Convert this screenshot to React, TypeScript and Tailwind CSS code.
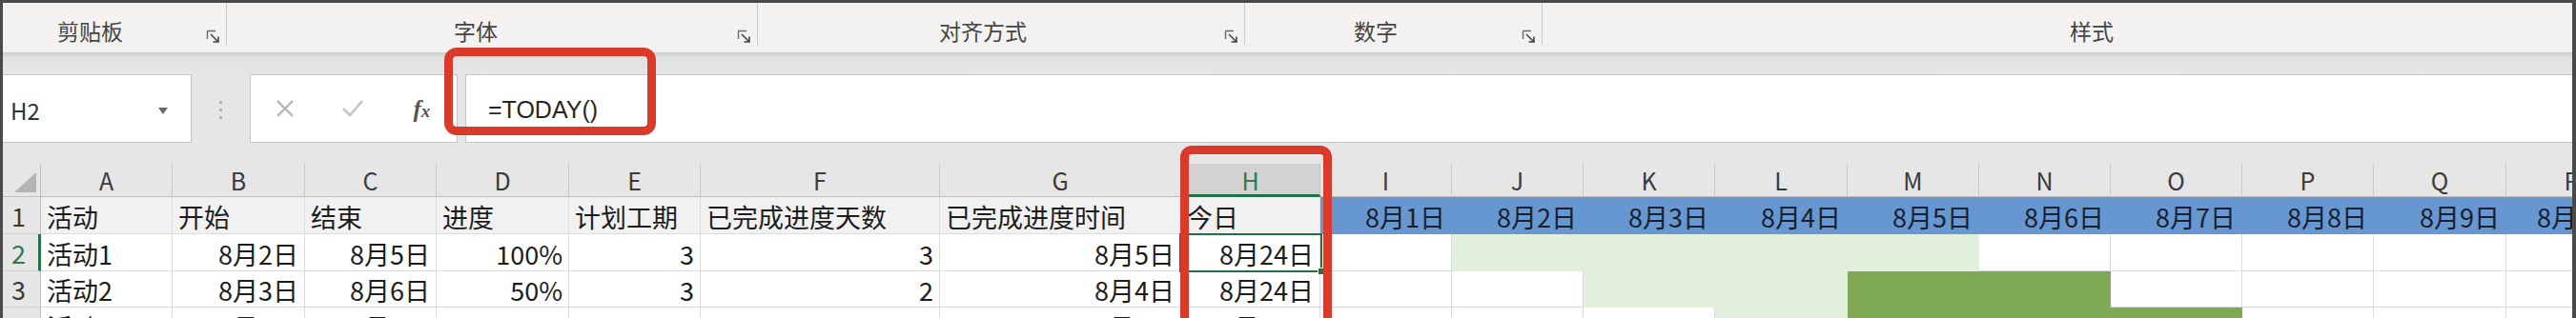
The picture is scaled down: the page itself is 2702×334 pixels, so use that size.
import React from "react";

type Fill = "none" | "head" | "blue" | "light" | "dark";

const fillClass: Record<Fill, string> = {
  none: "bg-white border-[#dadada]",
  head: "bg-[#f1f1f1] border-[#dedede]",
  blue: "bg-[#6797d1] border-[#6797d1] text-[#17202e]",
  light: "bg-[#e2efda] border-[#e2efda]",
  dark: "bg-[#7fa955] border-[#7fa955]",
};

const letters = ["A", "B", "C", "D", "E", "F", "G", "H", "I", "J", "K", "L", "M", "N", "O", "P", "Q", "R"];

const groups = [
  { label: "剪贴板", cls: "w-[235px] pl-[57px]", launcher: true },
  { label: "字体", cls: "w-[557px] pl-[238px]", launcher: true },
  { label: "对齐方式", cls: "w-[511px] pl-[190px]", launcher: true },
  { label: "数字", cls: "w-[312px] pl-[114px]", launcher: true },
  { label: "样式", cls: "flex-1 pl-[553px] border-r-0", launcher: false },
];

const days = ["8月1日", "8月2日", "8月3日", "8月4日", "8月5日", "8月6日", "8月7日", "8月8日", "8月9日", "8月10日"];

const rows: { n: number; cells: string[]; gantt: Fill[] }[] = [
  {
    n: 2,
    cells: ["活动1", "8月2日", "8月5日", "100%", "3", "3", "8月5日", "8月24日"],
    gantt: ["none", "light", "light", "light", "light", "none", "none", "none", "none", "none"],
  },
  {
    n: 3,
    cells: ["活动2", "8月3日", "8月6日", "50%", "3", "2", "8月4日", "8月24日"],
    gantt: ["none", "none", "light", "light", "dark", "dark", "none", "none", "none", "none"],
  },
  {
    n: 4,
    cells: ["活动3", "8月4日", "8月7日", "33%", "3", "1", "8月5日", "8月24日"],
    gantt: ["none", "none", "none", "light", "dark", "dark", "dark", "none", "none", "none"],
  },
];

function Launcher() {
  return (
    <svg width="15" height="15" viewBox="0 0 15 15" className="mb-[1px] ml-auto mr-[6px] self-end">
      <path d="M1.5 1.5H10M1.5 1.5V10" stroke="#6b6b6b" strokeWidth="1.4" fill="none" />
      <path d="M5 5L13 13M13 7.5V13H7.5" stroke="#444" strokeWidth="1.6" fill="none" />
    </svg>
  );
}

function Cell({ text = "", right = false, fill = "none" }: { text?: string; right?: boolean; fill?: Fill }) {
  return (
    <div
      className={`flex items-end overflow-hidden whitespace-nowrap border-r border-b pb-[4px] text-[27px] leading-none text-[#1c1c1c] ${
        right ? "justify-end pr-[6px]" : "pl-[6px]"
      } ${fillClass[fill]}`}
    >
      {text}
    </div>
  );
}

function RowHead({ n, active = false }: { n: number; active?: boolean }) {
  return (
    <div
      className={`flex items-center border-b border-[#d2d2d2] bg-[#e6e6e6] pl-[9px] text-[27px] leading-none ${
        active ? "border-r-[3px] border-r-[#217346] text-[#2f7a4e]" : "border-r border-r-[#bfbfbf] text-[#3a3a3a]"
      }`}
    >
      {n}
    </div>
  );
}

export default function App() {
  return (
    <div className="relative h-[334px] w-[2702px] overflow-hidden bg-[#4a4a4a] font-['Noto_Sans_CJK_SC','Liberation_Sans',sans-serif]">
      <div className="ml-[3px] mt-[3px] flex h-[331px] w-[2695px] flex-col overflow-hidden bg-[#e6e6e6]">
        {/* ribbon group labels */}
        <div className="flex h-[52px] shrink-0 items-start bg-[#f3f2f1]">
          {groups.map((g) => (
            <div key={g.label} className={`flex h-[44px] border-r border-[#c8c8c8] ${g.cls}`}>
              <span className="mb-[3px] self-end text-[23px] leading-none text-[#444]">{g.label}</span>
              {g.launcher && <Launcher />}
            </div>
          ))}
        </div>

        <div className="h-[23px] shrink-0 bg-[linear-gradient(#cdcdcd,#e2e2e2_6px,#e6e6e6)]" />

        {/* formula bar */}
        <div className="flex h-[72px] shrink-0">
          <div className="flex w-[198px] items-center border-y border-r border-[#c6c6c6] bg-white pl-[8px] pt-[4px]">
            <span className="text-[24px] leading-none text-[#333]">H2</span>
            <svg width="10" height="7" viewBox="0 0 10 7" className="ml-auto mr-[24px]">
              <path d="M0 0H10L5 7Z" fill="#6a6a6a" />
            </svg>
          </div>
          <div className="flex w-[61px] flex-col items-center justify-center gap-[5px] pt-[2px]">
            <span className="h-[3px] w-[3px] rounded-full bg-[#a8a8a8]" />
            <span className="h-[3px] w-[3px] rounded-full bg-[#a8a8a8]" />
            <span className="h-[3px] w-[3px] rounded-full bg-[#a8a8a8]" />
          </div>
          <div className="flex w-[218px] border border-[#c6c6c6] bg-white">
            <div className="flex w-[72px] items-center justify-center">
              <svg width="20" height="20" viewBox="0 0 20 20">
                <path d="M2 2L18 18M18 2L2 18" stroke="#b4b4b4" strokeWidth="2.4" />
              </svg>
            </div>
            <div className="flex w-[72px] items-center justify-center">
              <svg width="24" height="20" viewBox="0 0 24 20">
                <path d="M2 10L9 17L22 2" stroke="#c6c6c6" strokeWidth="2.6" fill="none" />
              </svg>
            </div>
            <div className="flex w-[74px] items-center justify-center">
              <span className="font-['Liberation_Serif',serif] text-[25px] font-bold italic leading-none text-[#555]">
                f<span className="text-[19px]">x</span>
              </span>
            </div>
          </div>
          <div className="w-[8px]" />
          <div className="flex flex-1 items-center border-y border-l border-[#c6c6c6] bg-white pl-[23px] pt-[2px]">
            <span className="font-['Liberation_Sans',sans-serif] text-[25px] leading-none text-[#262626]">=TODAY()</span>
          </div>
        </div>

        <div className="h-[22px] shrink-0" />

        {/* sheet grid */}
        <div className="grid shrink-0 grid-cols-[40px_138px_139px_138px_139px_138px_251px_253px_146px_138px_138px_138px_139px_138px_138px_138px_138px_139px_138px] grid-rows-[35px_39px_39px_38px_39px]">
          <div className="flex items-end justify-end border-r border-b border-[#bfbfbf] bg-[#e6e6e6] pb-[4px] pr-[4px]">
            <svg width="23" height="21" viewBox="0 0 23 21">
              <path d="M23 0V21H0Z" fill="#b4b4b4" />
            </svg>
          </div>
          {letters.map((l) =>
            l === "H" ? (
              <div
                key={l}
                className="flex items-center justify-center border-r border-b-[3px] border-r-[#bfbfbf] border-b-[#217346] bg-[#d2d2d2] pt-[2px] text-[25px] leading-none text-[#2f7a4e]"
              >
                {l}
              </div>
            ) : (
              <div
                key={l}
                className="flex items-center justify-center border-r border-b border-r-[#c8c8c8] border-b-[#bdbdbd] bg-[#e6e6e6] text-[25px] leading-none text-[#3a3a3a]"
              >
                {l}
              </div>
            )
          )}

          <RowHead n={1} />
          {["活动", "开始", "结束", "进度", "计划工期", "已完成进度天数", "已完成进度时间", "今日"].map((t) => (
            <Cell key={t} text={t} fill="head" />
          ))}
          {days.map((d) => (
            <Cell key={d} text={d} right fill="blue" />
          ))}

          {rows.map((r) => (
            <React.Fragment key={r.n}>
              <RowHead n={r.n} active={r.n === 2} />
              {r.cells.map((t, i) => (
                <Cell key={i} text={t} right={i > 0} />
              ))}
              {r.gantt.map((f, i) => (
                <Cell key={"g" + i} fill={f} />
              ))}
            </React.Fragment>
          ))}
        </div>
      </div>

      {/* active cell H2 */}
      <div className="absolute left-[1237px] top-[245px] h-[41px] w-[150px] border-2 border-[#1f7244]">
        <div className="absolute bottom-[-5px] right-[-5px] h-[8px] w-[8px] border border-white bg-[#1f7244]" />
      </div>

      {/* red highlight boxes */}
      <div className="absolute left-[466px] top-[50px] h-[92px] w-[222px] rounded-[13px] border-[9px] border-[#d93a2a]" />
      <div className="absolute left-[1238px] top-[153px] h-[200px] w-[159px] rounded-[12px] border-[9px] border-[#d93a2a]" />
    </div>
  );
}
